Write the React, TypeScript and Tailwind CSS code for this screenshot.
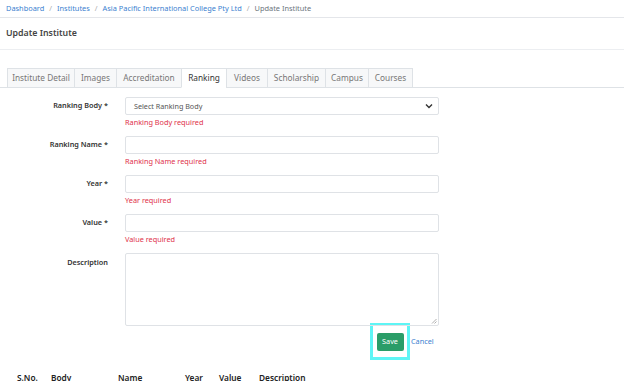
import React from "react";

const tabs = [
  { label: "Institute Detail", w: "w-[68px]" },
  { label: "Images", w: "w-[43px]" },
  { label: "Accreditation", w: "w-[66px]" },
  { label: "Ranking", w: "w-[46px]", active: true },
  { label: "Videos", w: "w-[42px]" },
  { label: "Scholarship", w: "w-[59px]" },
  { label: "Campus", w: "w-[44px]" },
  { label: "Courses", w: "w-[45px]" },
];

export default function App() {
  return (
    <div className="h-[381px] w-[624px] overflow-hidden bg-white font-['Noto_Sans',sans-serif] text-[#333]">
      {/* Breadcrumb */}
      <div className="flex h-[18px] items-center gap-[5px] border-b border-[#e4e6ea] px-[6px] text-[7.4px]">
        <span className="text-[#3c7fd0]">Dashboard</span>
        <span className="text-[#aaa]">/</span>
        <span className="text-[#3c7fd0]">Institutes</span>
        <span className="text-[#aaa]">/</span>
        <span className="text-[#3c7fd0]">Asia Pacific International College Pty Ltd</span>
        <span className="text-[#aaa]">/</span>
        <span className="text-[#6c757d]">Update Institute</span>
      </div>

      {/* Title */}
      <div className="flex h-[32px] items-center border-b border-[#eceef1] px-[6px] text-[8.8px] font-semibold text-[#444]">
        Update Institute
      </div>

      {/* Tabs */}
      <div className="mt-[18px] flex border-b border-[#dee2e6] pl-[7px]">
        {tabs.map((t) => (
          <div
            key={t.label}
            className={`${t.w} -mb-px -mr-px flex h-[20px] items-center justify-center border border-[#dee2e6] text-[8.3px] ${
              t.active ? "border-b-white bg-white text-[#333]" : "bg-[#f7f8f9] text-[#777]"
            }`}
          >
            {t.label}
          </div>
        ))}
      </div>

      {/* Form */}
      <div className="mt-[9px] flex flex-col">
        <Field label="Ranking Body *" error="Ranking Body required">
          <div className="flex h-[18px] items-center justify-between rounded-[2px] border border-[#dfe2e6] pl-[8px] pr-[5px] text-[7.2px] text-[#555]">
            <span>Select Ranking Body</span>
            <svg width="8" height="6" viewBox="0 0 8 6" fill="none">
              <path d="M1 1.5 4 4.5 7 1.5" stroke="#333" strokeWidth="1.4" />
            </svg>
          </div>
        </Field>
        <Field label="Ranking Name *" error="Ranking Name required">
          <div className="h-[18px] rounded-[2px] border border-[#dfe2e6]" />
        </Field>
        <Field label="Year *" error="Year required">
          <div className="h-[18px] rounded-[2px] border border-[#dfe2e6]" />
        </Field>
        <Field label="Value *" error="Value required">
          <div className="h-[18px] rounded-[2px] border border-[#dfe2e6]" />
        </Field>
        <div className="flex">
          <div className="w-[108px] pt-[4px] text-right text-[7.3px] font-semibold text-[#333]">Description</div>
          <div className="ml-[17px] w-[314px]">
            <div className="relative h-[73px] rounded-[2px] border border-[#dfe2e6]">
              <svg className="absolute bottom-[1px] right-[1px]" width="6" height="6" viewBox="0 0 6 6">
                <path d="M5.5 1 1 5.5M5.5 3.5 3.5 5.5" stroke="#999" strokeWidth="0.8" />
              </svg>
            </div>
          </div>
        </div>

        {/* Actions */}
        <div className="mt-[-3px] flex items-center pl-[370px]">
          <div className="flex h-[37px] w-[40px] items-center justify-center border-[3px] border-[#5ef5f5]">
            <div className="flex h-[18px] w-[27px] items-center justify-center rounded-[2px] bg-[#2a9d68] text-[7.3px] text-white">
              Save
            </div>
          </div>
          <span className="ml-[1px] text-[7.3px] text-[#3c7fd0]">Cancel</span>
        </div>
      </div>

      {/* Table header */}
      <div className="mt-[12px] flex text-[8.3px] font-semibold text-[#222]">
        <span className="w-[51px] pl-[17px]">S.No.</span>
        <span className="w-[67px]">Body</span>
        <span className="w-[67px]">Name</span>
        <span className="w-[34px]">Year</span>
        <span className="w-[40px]">Value</span>
        <span>Description</span>
      </div>
    </div>
  );
}

function Field({ label, error, children }: { label: string; error: string; children: React.ReactNode }) {
  return (
    <div className="flex h-[39px]">
      <div className="w-[108px] pt-[3px] text-right text-[7.3px] font-semibold text-[#333]">{label}</div>
      <div className="ml-[17px] w-[314px]">
        {children}
        <div className="mt-[2px] text-[7.3px] text-[#e0314b]">{error}</div>
      </div>
    </div>
  );
}
